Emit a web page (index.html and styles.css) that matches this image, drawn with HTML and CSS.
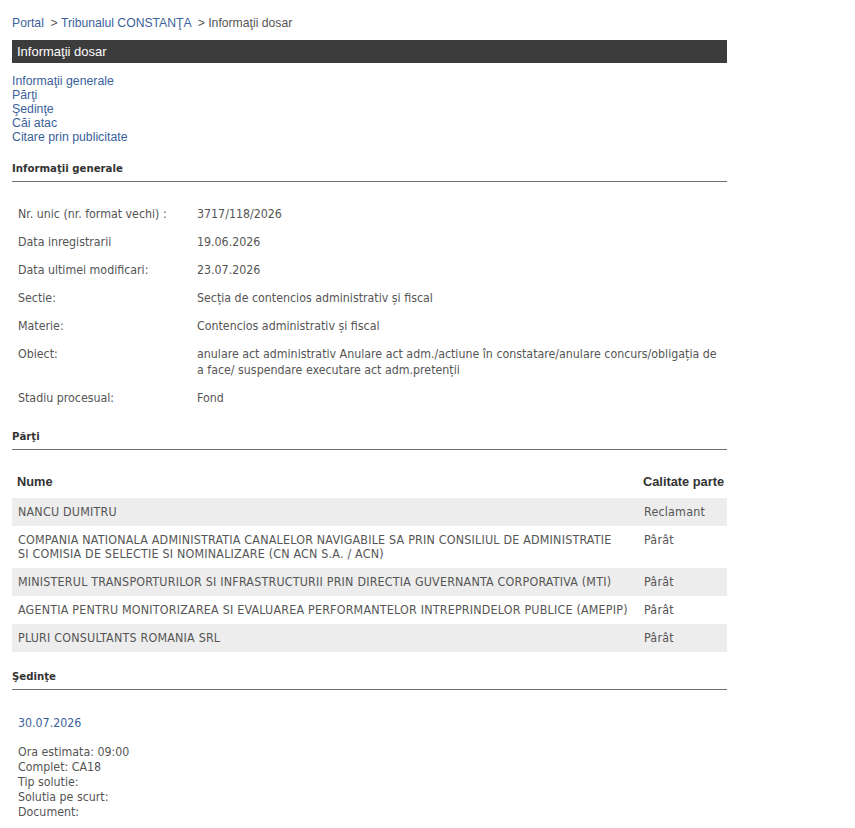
FILE: index.html
```html
<!DOCTYPE html>
<html lang="ro">
<head>
    <meta charset="UTF-8">
    <title>Informaţii dosar</title>
    <link rel="stylesheet" href="styles.css">
</head>
<body>
    <div class="page">
        <div class="breadcrumb">
            <a href="#">Portal</a> &nbsp;&gt; <a href="#">Tribunalul CONSTANŢA</a> &nbsp;&gt; Informaţii dosar
        </div>

        <div class="title-bar">Informaţii dosar</div>

        <ul class="anchors">
            <li><a href="#generale">Informaţii generale</a></li>
            <li><a href="#parti">Părţi</a></li>
            <li><a href="#sedinte">Şedinţe</a></li>
            <li><a href="#atac">Căi atac</a></li>
            <li><a href="#citare">Citare prin publicitate</a></li>
        </ul>

        <h2 class="section-title" id="generale">Informaţii generale</h2>
        <table class="info-table">
            <tr><td class="label">Nr. unic (nr. format vechi) :</td><td>3717/118/2026</td></tr>
            <tr><td class="label">Data inregistrarii</td><td>19.06.2026</td></tr>
            <tr><td class="label">Data ultimei modificari:</td><td>23.07.2026</td></tr>
            <tr><td class="label">Sectie:</td><td>Secția de contencios administrativ și fiscal</td></tr>
            <tr><td class="label">Materie:</td><td>Contencios administrativ și fiscal</td></tr>
            <tr><td class="label">Obiect:</td><td>anulare act administrativ Anulare act adm./actiune în constatare/anulare concurs/obligația de a face/ suspendare executare act adm.pretenții</td></tr>
            <tr><td class="label">Stadiu procesual:</td><td>Fond</td></tr>
        </table>

        <h2 class="section-title" id="parti">Părţi</h2>
        <table class="parti-table">
            <colgroup>
                <col>
                <col class="role-col">
            </colgroup>
            <thead>
                <tr><th>Nume</th><th>Calitate parte</th></tr>
            </thead>
            <tbody>
                <tr><td>NANCU DUMITRU</td><td>Reclamant</td></tr>
                <tr><td>COMPANIA NATIONALA ADMINISTRATIA CANALELOR NAVIGABILE SA PRIN CONSILIUL DE ADMINISTRATIE SI&nbsp;COMISIA DE SELECTIE SI NOMINALIZARE (CN ACN S.A. / ACN)</td><td>Pârât</td></tr>
                <tr><td>MINISTERUL TRANSPORTURILOR SI INFRASTRUCTURII PRIN DIRECTIA GUVERNANTA CORPORATIVA (MTI)</td><td>Pârât</td></tr>
                <tr><td>AGENTIA PENTRU MONITORIZAREA SI EVALUAREA PERFORMANTELOR INTREPRINDELOR PUBLICE (AMEPIP)</td><td>Pârât</td></tr>
                <tr><td>PLURI CONSULTANTS ROMANIA SRL</td><td>Pârât</td></tr>
            </tbody>
        </table>

        <h2 class="section-title" id="sedinte">Şedinţe</h2>
        <div class="sedinta">
            <div class="sedinta-date">30.07.2026</div>
            <div class="sedinta-details">
                Ora estimata: 09:00<br>
                Complet: CA18<br>
                Tip solutie:<br>
                Solutia pe scurt:<br>
                Document:
            </div>
        </div>
    </div>
</body>
</html>
```

FILE: styles.css
```css
body {
    margin: 0;
    background: #fff;
    font-family: "DejaVu Sans Condensed", "DejaVu Sans", sans-serif;
    font-size: 12.3px;
    color: #555;
}

a {
    color: #3b5f9c;
    text-decoration: none;
}

.page {
    width: 715px;
    padding: 15px 0 0 12px;
}

.breadcrumb {
    font-family: "Liberation Sans", Arial, sans-serif;
    font-size: 12.2px;
    line-height: 16px;
    color: #555;
}

.title-bar {
    margin-top: 9px;
    height: 23px;
    line-height: 23px;
    padding-left: 5px;
    background: #3c3c3c;
    color: #fff;
    font-family: "Liberation Sans", Arial, sans-serif;
    font-size: 13px;
}

.anchors {
    list-style: none;
    margin: 11px 0 0;
    padding: 0;
    font-family: "Liberation Sans", Arial, sans-serif;
    font-size: 12.3px;
    line-height: 14px;
}

.section-title {
    margin: 17px 0 0;
    padding-bottom: 4px;
    border-bottom: 1px solid #6f6f6f;
    font-size: 11.3px;
    font-weight: bold;
    color: #333;
    line-height: 16px;
}

.info-table {
    width: 100%;
    margin-top: 18px;
    border-collapse: collapse;
}

.info-table td {
    padding: 6px;
    line-height: 16px;
    vertical-align: top;
}

.info-table .label {
    width: 167px;
}

.parti-table {
    width: 100%;
    margin-top: 20px;
    border-collapse: collapse;
    table-layout: fixed;
}

.parti-table .role-col {
    width: 89px;
}

.parti-table th {
    font-family: "Liberation Sans", Arial, sans-serif;
    font-size: 12.8px;
    font-weight: bold;
    color: #333;
    text-align: left;
    white-space: nowrap;
    padding: 5px 5px 9px;
    line-height: 14px;
}

.parti-table td {
    padding: 7px 6px;
    line-height: 14px;
    vertical-align: top;
    font-size: 12.4px;
    letter-spacing: 0.2px;
}

.parti-table tbody tr:nth-child(odd) {
    background: #ededed;
}

.sedinta {
    padding: 25px 6px 0;
}

.sedinta-date {
    color: #3b5f9c;
    line-height: 16px;
}

.sedinta-details {
    margin-top: 14px;
    line-height: 15px;
}
```
